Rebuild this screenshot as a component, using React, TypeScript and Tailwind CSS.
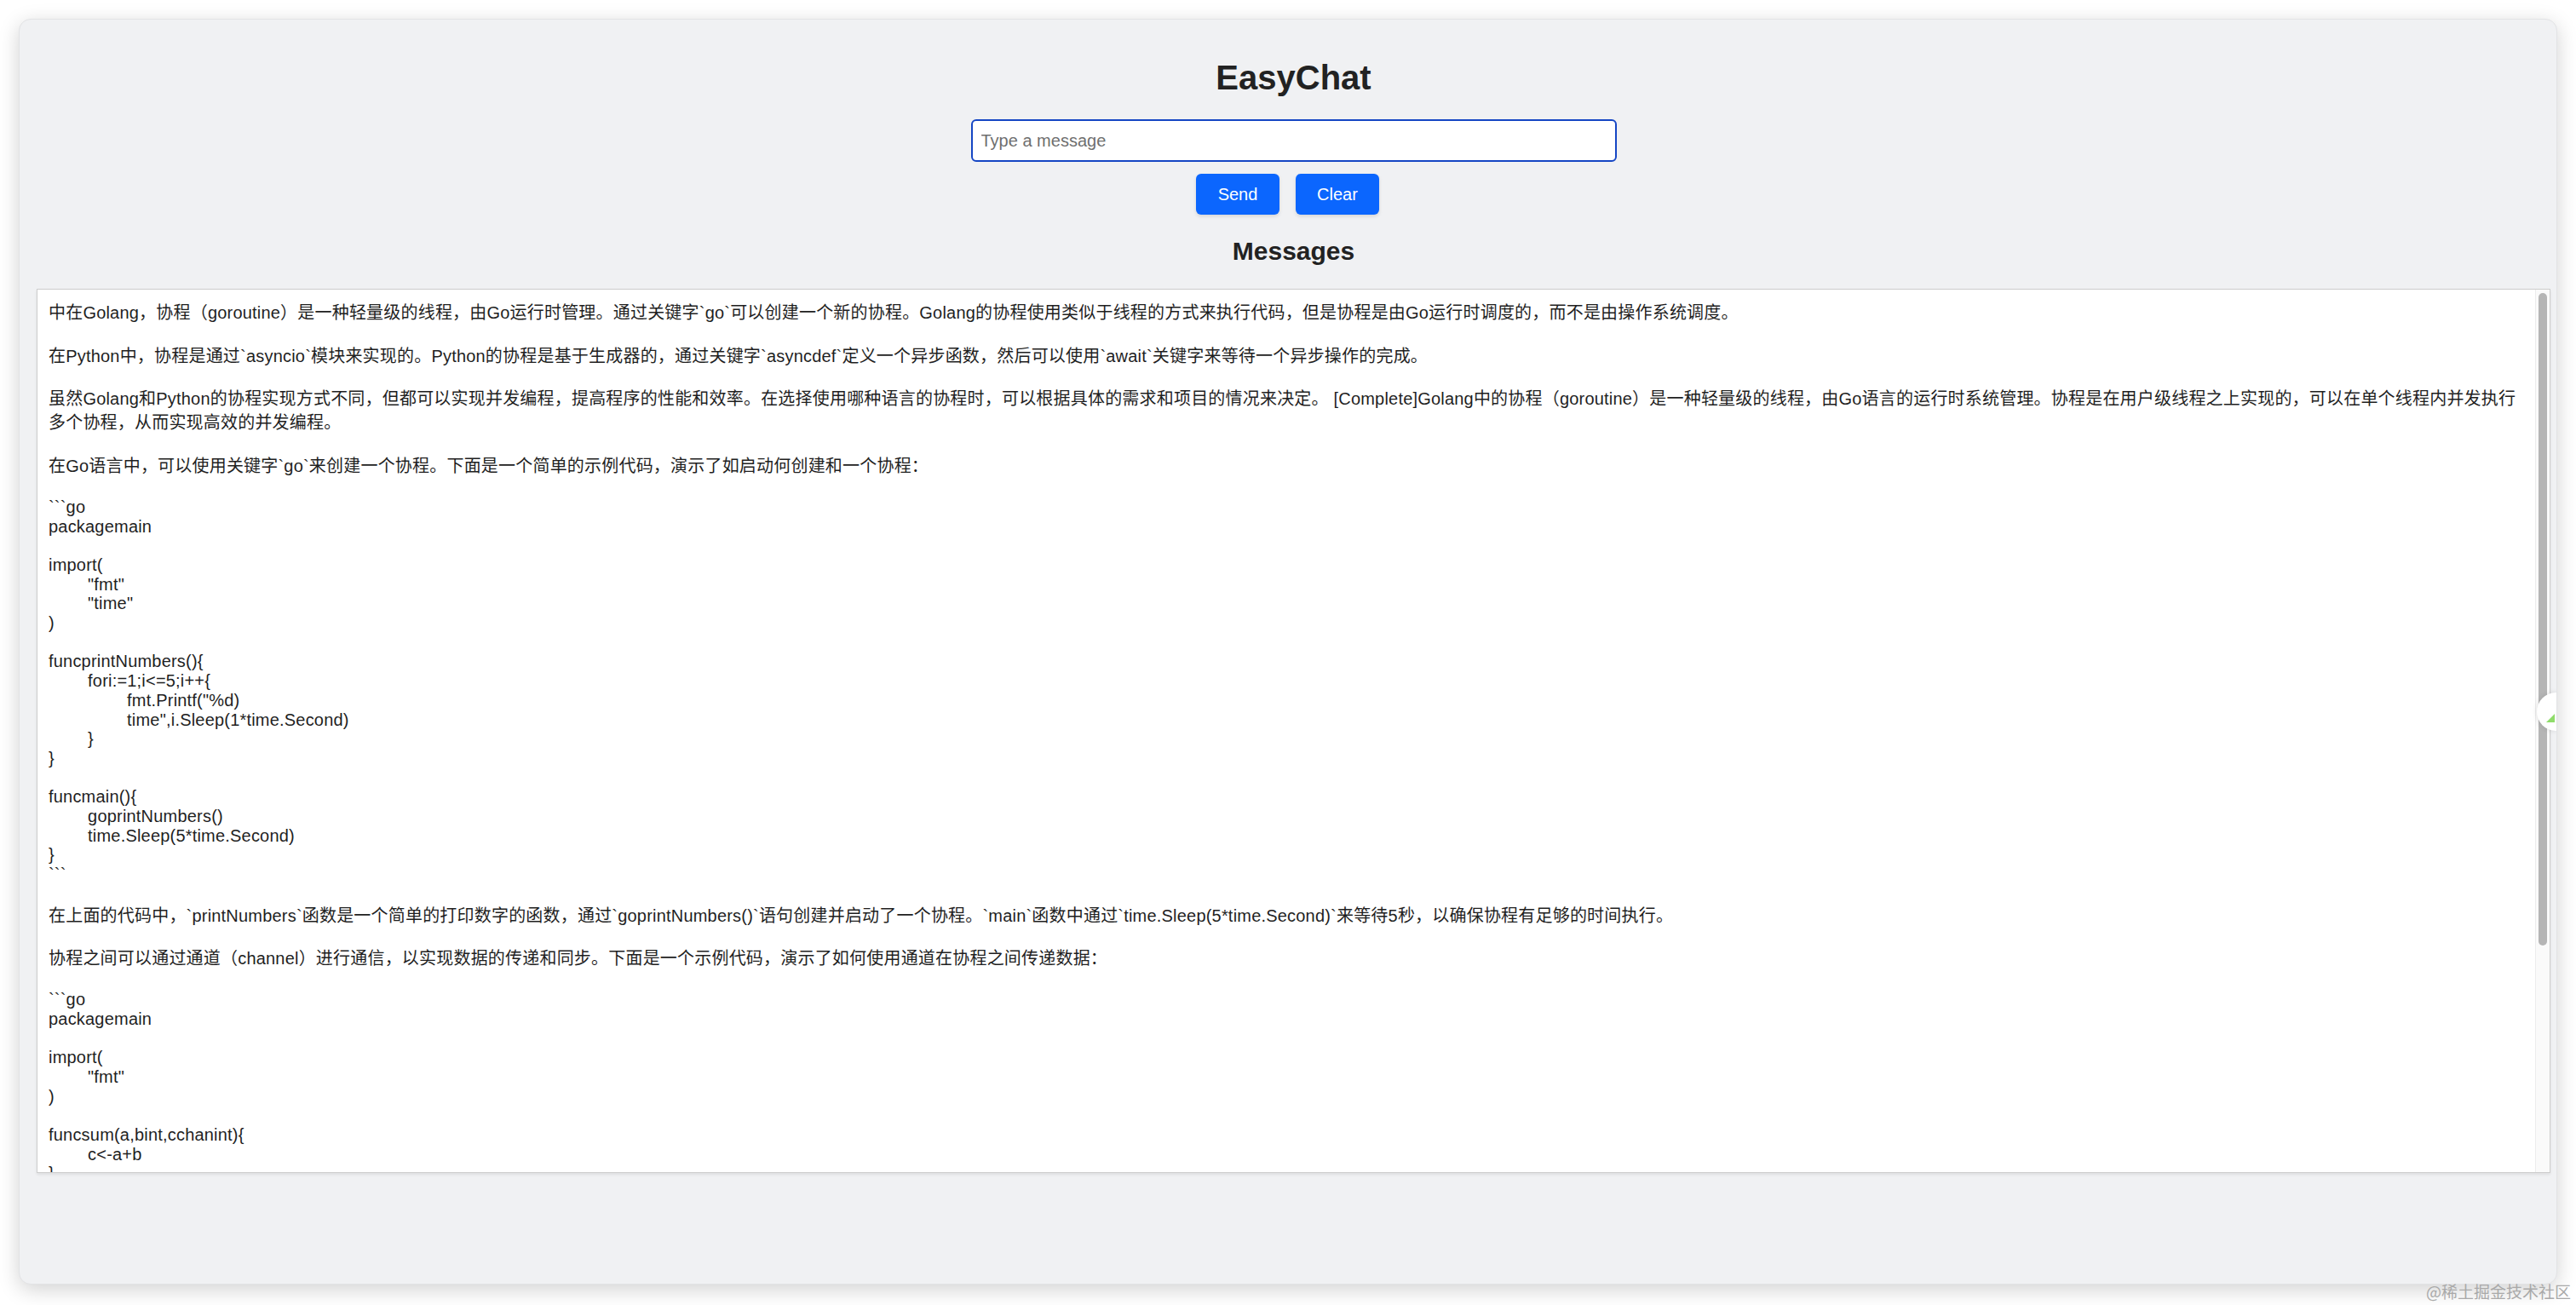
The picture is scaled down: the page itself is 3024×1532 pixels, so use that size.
import { useState } from 'react';

const messages = `中在Golang，协程（goroutine）是一种轻量级的线程，由Go运行时管理。通过关键字\`go\`可以创建一个新的协程。Golang的协程使用类似于线程的方式来执行代码，但是协程是由Go运行时调度的，而不是由操作系统调度。

在Python中，协程是通过\`asyncio\`模块来实现的。Python的协程是基于生成器的，通过关键字\`asyncdef\`定义一个异步函数，然后可以使用\`await\`关键字来等待一个异步操作的完成。

虽然Golang和Python的协程实现方式不同，但都可以实现并发编程，提高程序的性能和效率。在选择使用哪种语言的协程时，可以根据具体的需求和项目的情况来决定。 [Complete]Golang中的协程（goroutine）是一种轻量级的线程，由Go语言的运行时系统管理。协程是在用户级线程之上实现的，可以在单个线程内并发执行多个协程，从而实现高效的并发编程。

在Go语言中，可以使用关键字\`go\`来创建一个协程。下面是一个简单的示例代码，演示了如启动何创建和一个协程：

\`\`\`go
packagemain

import(
\t"fmt"
\t"time"
)

funcprintNumbers(){
\tfori:=1;i<=5;i++{
\t\tfmt.Printf("%d)
\t\ttime",i.Sleep(1*time.Second)
\t}
}

funcmain(){
\tgoprintNumbers()
\ttime.Sleep(5*time.Second)
}
\`\`\`

在上面的代码中，\`printNumbers\`函数是一个简单的打印数字的函数，通过\`goprintNumbers()\`语句创建并启动了一个协程。\`main\`函数中通过\`time.Sleep(5*time.Second)\`来等待5秒，以确保协程有足够的时间执行。

协程之间可以通过通道（channel）进行通信，以实现数据的传递和同步。下面是一个示例代码，演示了如何使用通道在协程之间传递数据：

\`\`\`go
packagemain

import(
\t"fmt"
)

funcsum(a,bint,cchanint){
\tc<-a+b
}

funcmain(){
\tc:=make(chanint)
\tgosum(1,2,c)
\tresult:=<-c
\tfmt.Println(result)
}
\`\`\``;

const hasCJK = (line: string) => /[\u3000-\u303f\u4e00-\u9fff\uff00-\uffef]/.test(line);

export default function App() {
  const [text, setText] = useState('');

  return (
    <div className="relative h-[1532px] w-full bg-white p-[22px] pb-[24px] font-['Liberation_Sans','Noto_Sans_CJK_SC',sans-serif] text-[#222]">
      {/* Window */}
      <div className="relative flex h-full flex-col overflow-hidden rounded-[14px] border border-[#e2e3e5] bg-[#f0f1f3] pl-[20px] pr-[7px] pt-[46px] shadow-[0_6px_24px_rgba(0,0,0,0.18)]">
        <h1 className="text-center text-[40px] font-bold leading-[44px] text-[#222]">EasyChat</h1>

        <div className="mt-[27px] flex justify-center">
          <input
            value={text}
            onChange={(e) => setText(e.target.value)}
            placeholder="Type a message"
            className="h-[50px] w-[758px] rounded-[6px] border-2 border-[#1546c4] bg-white px-[10px] text-[20px] text-[#222] outline-none placeholder:text-[#6f6f6f]"
          />
        </div>

        <div className="mt-[14px] flex justify-center gap-[19px] pr-[14px]">
          <button className="h-[48px] w-[98px] rounded-[6px] bg-[#0b66fe] text-[20px] text-white shadow-[0_2px_4px_rgba(0,0,0,0.12)]">
            Send
          </button>
          <button
            onClick={() => setText('')}
            className="h-[48px] w-[98px] rounded-[6px] bg-[#0b66fe] text-[20px] text-white shadow-[0_2px_4px_rgba(0,0,0,0.12)]"
          >
            Clear
          </button>
        </div>

        <h2 className="mt-[26px] text-center text-[30px] font-bold leading-[34px] text-[#222]">Messages</h2>

        {/* Message list */}
        <div className="mt-[27px] flex h-[1038px] overflow-hidden border border-[#cdcdcd] bg-white shadow-[0_2px_3px_rgba(0,0,0,0.08)]">
          <div className="min-w-0 flex-1 overflow-hidden whitespace-pre-wrap break-words pb-[13px] pl-[13px] pr-[14px] pt-[13px] text-[20px] tracking-[0.2px] text-[#1f1f1f] [tab-size:8]">
            {messages.split('\n').map((line, i) => (
              <div key={i} className={hasCJK(line) ? 'leading-[28px]' : 'leading-[22.7px]'}>
                {line || '\u00a0'}
              </div>
            ))}
          </div>
          <div className="flex w-[17px] shrink-0 justify-center border-l border-[#ececec] bg-[#fafafa]">
            <div className="mt-[4px] h-[766px] w-[10px] rounded-full bg-[#b5b5b5]" />
          </div>
        </div>

        {/* extension handle at right edge */}
        <div className="absolute right-0 top-[790px] flex h-[45px] w-[23px] items-center justify-end rounded-l-full bg-white shadow-[0_0_6px_rgba(0,0,0,0.12)]">
          <div className="mr-[2px] mt-[14px] h-0 w-0 border-b-[10px] border-l-[10px] border-b-[#8fdc6a] border-l-transparent" />
        </div>
      </div>

      {/* watermark */}
      <div className="absolute bottom-[4px] right-[6px] font-['Noto_Sans_CJK_SC',sans-serif] text-[19px] leading-[24px] text-[#a9a9a9]">
        @稀土掘金技术社区
      </div>
    </div>
  );
}
